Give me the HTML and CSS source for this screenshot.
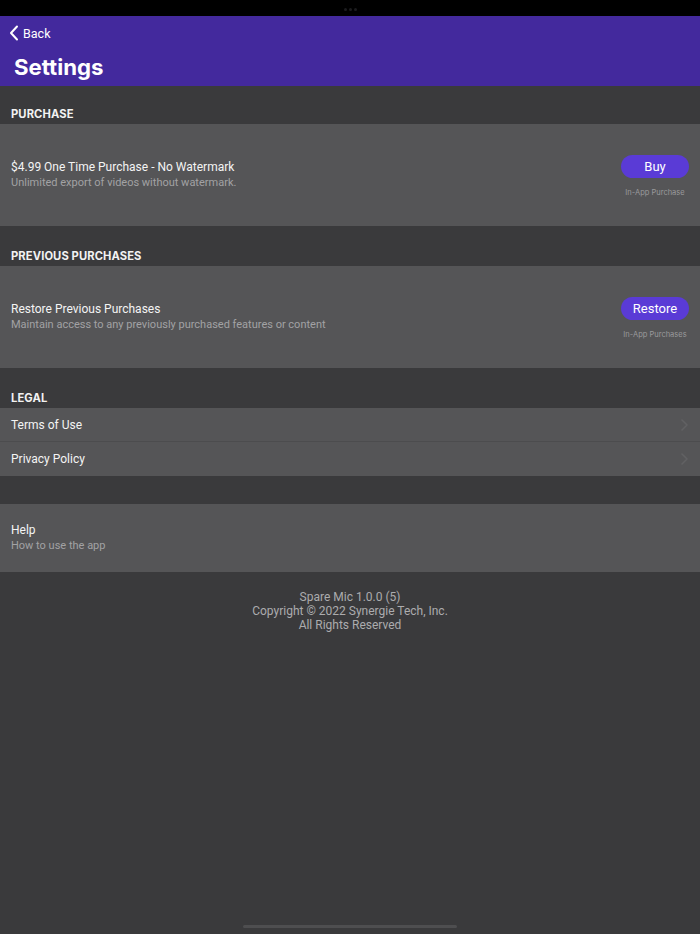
FILE: index.html
```html
<!DOCTYPE html>
<html>
<head>
<meta charset="utf-8">
<link rel="stylesheet" href="styles.css">
</head>
<body>
<div class="screen">
  <div class="statusbar"><span class="dots"><i></i><i></i><i></i></span></div>
  <header class="nav">
    <div class="back">
      <svg class="chev-left" width="10" height="16" viewBox="0 0 10 16"><path d="M8 1.5 L2 8 L8 14.5" fill="none" stroke="#fff" stroke-width="2" stroke-linecap="round" stroke-linejoin="round"/></svg>
      <span>Back</span>
    </div>
    <h1 class="title">Settings</h1>
  </header>

  <div class="section-head first">PURCHASE</div>
  <div class="cell tall">
    <div class="texts">
      <div class="main">$4.99 One Time Purchase - No Watermark</div>
      <div class="sub">Unlimited export of videos without watermark.</div>
    </div>
    <div class="action">
      <button class="pill">Buy</button>
      <div class="note">In-App Purchase</div>
    </div>
  </div>

  <div class="section-head">PREVIOUS PURCHASES</div>
  <div class="cell tall">
    <div class="texts">
      <div class="main">Restore Previous Purchases</div>
      <div class="sub">Maintain access to any previously purchased features or content</div>
    </div>
    <div class="action">
      <button class="pill">Restore</button>
      <div class="note">In-App Purchases</div>
    </div>
  </div>

  <div class="section-head">LEGAL</div>
  <div class="group">
    <div class="row"><span class="main">Terms of Use</span><svg class="chev" width="7" height="12" viewBox="0 0 7 12"><path d="M1 1 L6 6 L1 11" fill="none" stroke="#616163" stroke-width="1.6" stroke-linecap="round" stroke-linejoin="round"/></svg></div>
    <div class="row"><span class="main">Privacy Policy</span><svg class="chev" width="7" height="12" viewBox="0 0 7 12"><path d="M1 1 L6 6 L1 11" fill="none" stroke="#616163" stroke-width="1.6" stroke-linecap="round" stroke-linejoin="round"/></svg></div>
  </div>

  <div class="spacer"></div>
  <div class="cell help">
    <div class="texts">
      <div class="main">Help</div>
      <div class="sub">How to use the app</div>
    </div>
  </div>

  <footer class="footer">
    <div>Spare Mic 1.0.0 (5)</div>
    <div>Copyright © 2022 Synergie Tech, Inc.</div>
    <div>All Rights Reserved</div>
  </footer>

  <div class="home-indicator"></div>
</div>
</body>
</html>
```

FILE: styles.css
```css
* { box-sizing: border-box; }
html, body { margin: 0; padding: 0; }
body {
  background: #3a3a3c;
  font-family: Inter, "Noto Sans", "Liberation Sans", sans-serif;
  color: #fff;
}
.screen {
  width: 700px;
  height: 934px;
  display: flex;
  flex-direction: column;
  position: relative;
  background: #3a3a3c;
}
.statusbar {
  height: 16px;
  background: #000;
  display: flex;
  justify-content: center;
  align-items: center;
}
.dots { display: flex; gap: 2px; margin-top: 2px; }
.dots i { width: 3px; height: 3px; border-radius: 50%; background: #1c1c1e; display: block; }
.nav {
  background: #43299d;
  height: 70px;
  padding: 9px 0 0 9px;
}
.back {
  display: flex;
  align-items: center;
  gap: 4px;
  font-family: Roboto, Inter, sans-serif;
  font-size: 12.5px;
  height: 16px;
}
.title {
  margin: 12px 0 0 5px;
  font-size: 22.2px;
  font-weight: 700;
  letter-spacing: 0;
  line-height: 28px;
}
.section-head {
  height: 40px;
  padding: 0 11px 3px;
  display: flex;
  align-items: flex-end;
  font-size: 11.2px;
  font-weight: 700;
  color: #f2f2f2;
  letter-spacing: 0.1px;
}
.section-head.first { height: 38px; }
.cell {
  background: #555557;
  display: flex;
  align-items: center;
  padding: 0 11px;
}
.cell.tall { height: 102px; }
.cell.help { height: 68px; }
.texts { flex: 1; }
.main { font-family: Roboto, Inter, sans-serif; font-size: 12px; color: #f4f4f4; line-height: 16px; }
.sub { font-family: Roboto, Inter, sans-serif; font-size: 11px; color: #a2a2a4; line-height: 16px; }
.action {
  display: flex;
  flex-direction: column;
  align-items: center;
  gap: 10px;
  margin-top: 3px;
}
.pill {
  width: 68px;
  height: 23px;
  border: none;
  border-radius: 12px;
  background: #5a3bd6;
  color: #fff;
  font-family: Roboto, Inter, sans-serif;
  font-size: 13px;
  padding: 0;
}
.note { font-size: 7.5px; color: #9a9a9c; line-height: 10px; }
.group { background: #555557; }
.row {
  height: 34px;
  display: flex;
  align-items: center;
  justify-content: space-between;
  padding: 0 12px 0 11px;
  border-bottom: 1px solid #4c4c4e;
}
.row:last-child { border-bottom: none; }
.spacer { height: 28px; }
.footer {
  text-align: center;
  color: #acacae;
  font-family: Roboto, Inter, sans-serif;
  font-size: 12px;
  line-height: 14px;
  padding-top: 18px;
}
.home-indicator {
  position: absolute;
  left: 243px;
  bottom: 6px;
  width: 214px;
  height: 3px;
  border-radius: 2px;
  background: #4e4e50;
}
```
